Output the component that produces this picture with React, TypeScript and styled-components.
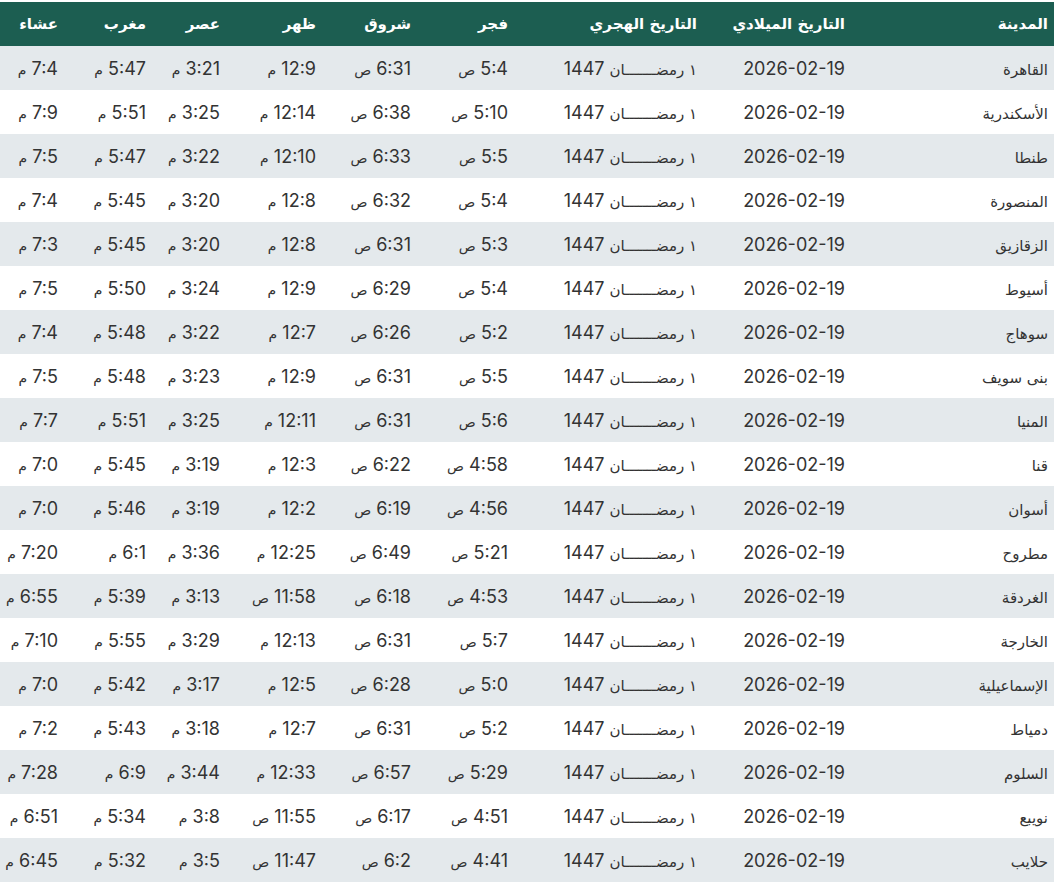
import React from 'react';
import styled, { createGlobalStyle } from 'styled-components';

const Global = createGlobalStyle`
  body { margin: 0; background: #fff; font-family: Inter, "Noto Sans", sans-serif; }
`;

const Wrap = styled.div`
  padding-top: 2px;
`;

const Table = styled.table`
  width: 1054px;
  border-collapse: collapse;
  table-layout: fixed;
  direction: rtl;
`;

const Th = styled.th<{ $w: number }>`
  width: ${p => p.$w}px;
  height: 44px;
  padding: 0 6px;
  text-align: right;
  background: #1c5e51;
  color: #fff;
  font-size: 15px;
  font-weight: 700;
  font-family: "DejaVu Sans", sans-serif;
  box-sizing: border-box;
`;

const Row = styled.tr<{ $odd: boolean }>`
  background: ${p => (p.$odd ? '#e4e9ec' : '#ffffff')};
`;

const Td = styled.td`
  height: 44px;
  padding: 0 6px;
  text-align: right;
  color: #333;
  font-size: 18px;
  white-space: nowrap;
  box-sizing: border-box;
`;

const City = styled.span`
  font-family: "DejaVu Sans", sans-serif;
  font-size: 15px;
`;

const Suffix = styled.span`
  font-family: "DejaVu Sans", sans-serif;
  font-size: 14px;
`;

const heads: [string, number][] = [
  ['المدينة', 203], ['التاريخ الميلادي', 148], ['التاريخ الهجري', 189], ['فجر', 97],
  ['شروق', 95], ['ظهر', 96], ['عصر', 74], ['مغرب', 88], ['عشاء', 64],
];

const data: string[][] = [
  ['القاهرة', '5:4 ص', '6:31 ص', '12:9 م', '3:21 م', '5:47 م', '7:4 م'],
  ['الأسكندرية', '5:10 ص', '6:38 ص', '12:14 م', '3:25 م', '5:51 م', '7:9 م'],
  ['طنطا', '5:5 ص', '6:33 ص', '12:10 م', '3:22 م', '5:47 م', '7:5 م'],
  ['المنصورة', '5:4 ص', '6:32 ص', '12:8 م', '3:20 م', '5:45 م', '7:4 م'],
  ['الزقازيق', '5:3 ص', '6:31 ص', '12:8 م', '3:20 م', '5:45 م', '7:3 م'],
  ['أسيوط', '5:4 ص', '6:29 ص', '12:9 م', '3:24 م', '5:50 م', '7:5 م'],
  ['سوهاج', '5:2 ص', '6:26 ص', '12:7 م', '3:22 م', '5:48 م', '7:4 م'],
  ['بنى سويف', '5:5 ص', '6:31 ص', '12:9 م', '3:23 م', '5:48 م', '7:5 م'],
  ['المنيا', '5:6 ص', '6:31 ص', '12:11 م', '3:25 م', '5:51 م', '7:7 م'],
  ['قنا', '4:58 ص', '6:22 ص', '12:3 م', '3:19 م', '5:45 م', '7:0 م'],
  ['أسوان', '4:56 ص', '6:19 ص', '12:2 م', '3:19 م', '5:46 م', '7:0 م'],
  ['مطروح', '5:21 ص', '6:49 ص', '12:25 م', '3:36 م', '6:1 م', '7:20 م'],
  ['الغردقة', '4:53 ص', '6:18 ص', '11:58 ص', '3:13 م', '5:39 م', '6:55 م'],
  ['الخارجة', '5:7 ص', '6:31 ص', '12:13 م', '3:29 م', '5:55 م', '7:10 م'],
  ['الإسماعيلية', '5:0 ص', '6:28 ص', '12:5 م', '3:17 م', '5:42 م', '7:0 م'],
  ['دمياط', '5:2 ص', '6:31 ص', '12:7 م', '3:18 م', '5:43 م', '7:2 م'],
  ['السلوم', '5:29 ص', '6:57 ص', '12:33 م', '3:44 م', '6:9 م', '7:28 م'],
  ['نويبع', '4:51 ص', '6:17 ص', '11:55 ص', '3:8 م', '5:34 م', '6:51 م'],
  ['حلايب', '4:41 ص', '6:2 ص', '11:47 ص', '3:5 م', '5:32 م', '6:45 م'],
];

const Time = ({ v }: { v: string }) => {
  const [t, s] = v.split(' ');
  return (
    <>
      {t} <Suffix>{s}</Suffix>
    </>
  );
};

export default function App() {
  return (
    <Wrap>
      <Global />
      <Table>
        <thead>
          <tr>
            {heads.map(([h, w]) => <Th key={h} $w={w}>{h}</Th>)}
          </tr>
        </thead>
        <tbody>
          {data.map((r, i) => (
            <Row key={r[0]} $odd={i % 2 === 0}>
              <Td><City>{r[0]}</City></Td>
              <Td>2026-02-19</Td>
              <Td><City>١ رمضـــــــان</City> 1447</Td>
              {r.slice(1).map((v, j) => <Td key={j}><Time v={v} /></Td>)}
            </Row>
          ))}
        </tbody>
      </Table>
    </Wrap>
  );
}
